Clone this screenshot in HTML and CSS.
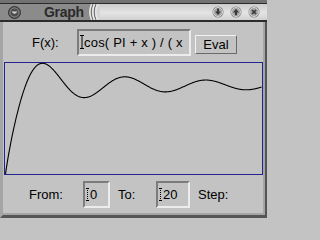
FILE: index.html
```html
<!DOCTYPE html>
<html>
<head>
<meta charset="utf-8">
<title>Graph</title>
<link rel="stylesheet" href="styles.css">
</head>
<body>
<div class="window">
  <div class="titlebar">
    <div class="tb-inner">
      <div class="tb-left">
        <svg class="menu-btn" width="13" height="13" viewBox="0 0 13 13">
          <circle cx="6.5" cy="6.5" r="6" fill="#4e4e4e" stroke="#333" stroke-width="1"/>
          <circle cx="6.5" cy="6.5" r="4.6" fill="none" stroke="#8e8e8e" stroke-width="1"/>
          <path d="M3.6 5.4 Q6.5 10.2 9.4 5.4 Z" fill="#d4d4d4"/>
        </svg>
        <span class="title">Graph</span>
      </div>
      <svg class="grooves" width="12" height="16" viewBox="0 0 12 16">
        <rect x="0" y="0" width="12" height="16" fill="#d4d4d4"/>
        <path d="M0 0 H3 Q-0.5 8 3 16 H0 Z" fill="#8b8b8b"/>
        <path d="M3.5 0 Q0 8 3.5 16" fill="none" stroke="#efefef" stroke-width="1"/>
        <path d="M5 0 Q1.5 8 5 16" fill="none" stroke="#6a6a6a" stroke-width="1"/>
        <path d="M6.5 0 Q3 8 6.5 16" fill="none" stroke="#efefef" stroke-width="1"/>
        <path d="M8 0 Q4.5 8 8 16" fill="none" stroke="#6a6a6a" stroke-width="1"/>
        <path d="M9.5 0 Q6 8 9.5 16" fill="none" stroke="#efefef" stroke-width="1"/>
      </svg>
      <div class="tb-right">
        <svg class="wbtn" width="12" height="12" viewBox="0 0 12 12">
          <circle cx="6" cy="6" r="5.5" fill="#7e7e7e"/>
          <circle cx="6" cy="6" r="4.5" fill="#a4a4a4" stroke="#e6e6e6" stroke-width="0.8"/>
          <path d="M5 2.6 H7 V5.4 H8.9 L6 9 L3.1 5.4 H5 Z" fill="#3a3a3a"/>
        </svg>
        <svg class="wbtn" width="12" height="12" viewBox="0 0 12 12">
          <circle cx="6" cy="6" r="5.5" fill="#7e7e7e"/>
          <circle cx="6" cy="6" r="4.5" fill="#a4a4a4" stroke="#e6e6e6" stroke-width="0.8"/>
          <path d="M6 2.8 L8.9 6.4 H7 V9.2 H5 V6.4 H3.1 Z" fill="#3a3a3a"/>
        </svg>
        <svg class="wbtn" width="12" height="12" viewBox="0 0 12 12">
          <circle cx="6" cy="6" r="5.5" fill="#7e7e7e"/>
          <circle cx="6" cy="6" r="4.5" fill="#a4a4a4" stroke="#e6e6e6" stroke-width="0.8"/>
          <path d="M4 4 L8 8 M8 4 L4 8" stroke="#3a3a3a" stroke-width="1.7"/>
        </svg>
      </div>
    </div>
  </div>

  <div class="body">
    <div class="row fx-row">
      <span class="label fx-label">F(x):</span>
      <div class="field expr">
        <svg class="caret" width="4" height="14" viewBox="0 0 4 14">
          <path d="M0 0.5 H4 M0 13.5 H4 M2 0 V14" stroke="#000" stroke-width="1"/>
        </svg>
        <span class="val">cos( PI + x ) / ( x</span>
      </div>
      <button class="btn-eval">Eval</button>
    </div>

    <div class="plot">
      <svg id="curve" width="257" height="111" viewBox="0 0 257 111">
        <path id="curve-path" d="" fill="none" stroke="#000" stroke-width="1.1" stroke-linejoin="round"/>
      </svg>
    </div>

    <div class="row range-row">
      <span class="label from">From:</span>
      <div class="field num n1">
        <svg class="caret dotted" width="3" height="13" viewBox="0 0 3 13">
          <path d="M0 0.5 H3 M0 12.5 H3 M1.5 0 V13" stroke="#000" stroke-width="1" stroke-dasharray="1 1"/>
        </svg>
        <span class="val">0</span>
      </div>
      <span class="label to">To:</span>
      <div class="field num n2">
        <svg class="caret dotted" width="3" height="13" viewBox="0 0 3 13">
          <path d="M0 0.5 H3 M0 12.5 H3 M1.5 0 V13" stroke="#000" stroke-width="1" stroke-dasharray="1 1"/>
        </svg>
        <span class="val">20</span>
      </div>
      <span class="label step">Step:</span>
    </div>
  </div>
</div>
<script src="script.js"></script>
</body>
</html>
```

FILE: styles.css
```css
* { box-sizing: border-box; }

body {
  margin: 0;
  font-family: "Liberation Sans", Arial, sans-serif;
  font-size: 13px;
  color: #000;
  background: #c3c3c3;
}

.window {
  width: 267px;
  height: 218px;
  display: flex;
  flex-direction: column;
  background: #c3c3c3;
  overflow: hidden;
}

/* title bar */
.titlebar {
  flex: none;
  padding-top: 3px;
  background: #727272;
}
.tb-inner {
  height: 19px;
  border-top: 1px solid #2b2b2b;
  border-bottom: 2px solid #2b2b2b;
  display: flex;
}
.tb-left {
  width: 88px;
  background: #8b8b8b;
  display: flex;
  align-items: center;
  padding-left: 8px;
}
.menu-btn { flex: none; }
.title {
  margin-left: 23px;
  font-weight: bold;
  font-size: 14px;
  color: #2a2a2a;
  letter-spacing: -0.3px;
}
.grooves { flex: none; display: block; }
.tb-right {
  flex: 1;
  background: linear-gradient(#cbcbcb, #e4e4e4 55%, #d0d0d0);
  display: flex;
  align-items: center;
  justify-content: flex-end;
  gap: 6px;
  padding-right: 7px;
}
.wbtn { flex: none; display: block; }

/* window body */
.body {
  flex: 1;
  display: flex;
  flex-direction: column;
  border-left: 3px solid #a5a5a5;
  border-right: 2px solid #555;
  border-bottom: 3px solid #555;
  padding: 0 2px 2px 0;
  box-shadow: inset -2px -2px 0 #a5a5a5;
}

.row {
  display: flex;
  align-items: center;
  flex: none;
}

.fx-row {
  height: 40px;
  padding-left: 29px;
}
.fx-label { width: 45px; }

.field {
  display: flex;
  align-items: center;
  overflow: hidden;
  white-space: nowrap;
  background: #c3c3c3;
  border: 2px solid;
  border-color: #7c7c7c #ececec #ececec #7c7c7c;
  height: 27px;
  flex: none;
}
.caret { flex: none; display: block; }
.expr {
  width: 114px;
  padding-left: 1px;
}
.expr .val {
  letter-spacing: 0.2px;
}

.btn-eval {
  margin-left: 4px;
  margin-top: 4px;
  width: 42px;
  height: 19px;
  padding: 0;
  font: inherit;
  color: #000;
  background: #c3c3c3;
  border: 1px solid;
  border-color: #f2f2f2 #6a6a6a #6a6a6a #f2f2f2;
}

/* plot */
.plot {
  flex: none;
  width: 259px;
  height: 113px;
  margin-left: 1px;
  border: 1px solid #24248e;
  position: relative;
}
.plot svg {
  position: absolute;
  left: 0;
  top: 0;
  overflow: visible;
}

/* range row */
.range-row {
  flex: 1;
  padding-left: 26px;
  padding-top: 1px;
}
.from { width: 54px; }
.num { padding-left: 1px; }
.num .val { margin-left: 1px; }
.n1 { width: 27px; }
.to { margin-left: 8px; width: 38px; }
.n2 { width: 34px; }
.step { margin-left: 8px; }
```

FILE: script.js
```js
(function () {
  var path = document.getElementById('curve-path');
  var N = 500, from = 0, to = 20;
  var pts = [], min = Infinity, max = -Infinity;
  for (var i = 0; i <= N; i++) {
    var t = from + (to - from) * i / N;
    var f = Math.cos(Math.PI + t) / (t + 1);
    pts.push([t, f]);
    if (f < min) min = f;
    if (f > max) max = f;
  }
  var d = '';
  for (var j = 0; j < pts.length; j++) {
    var x = 0.5 + (pts[j][0] - from) / (to - from) * 256;
    var y = 0.3 + (max - pts[j][1]) / (max - min) * 110.6;
    d += (j ? 'L' : 'M') + x.toFixed(2) + ' ' + y.toFixed(2);
  }
  path.setAttribute('d', d);
})();
```
